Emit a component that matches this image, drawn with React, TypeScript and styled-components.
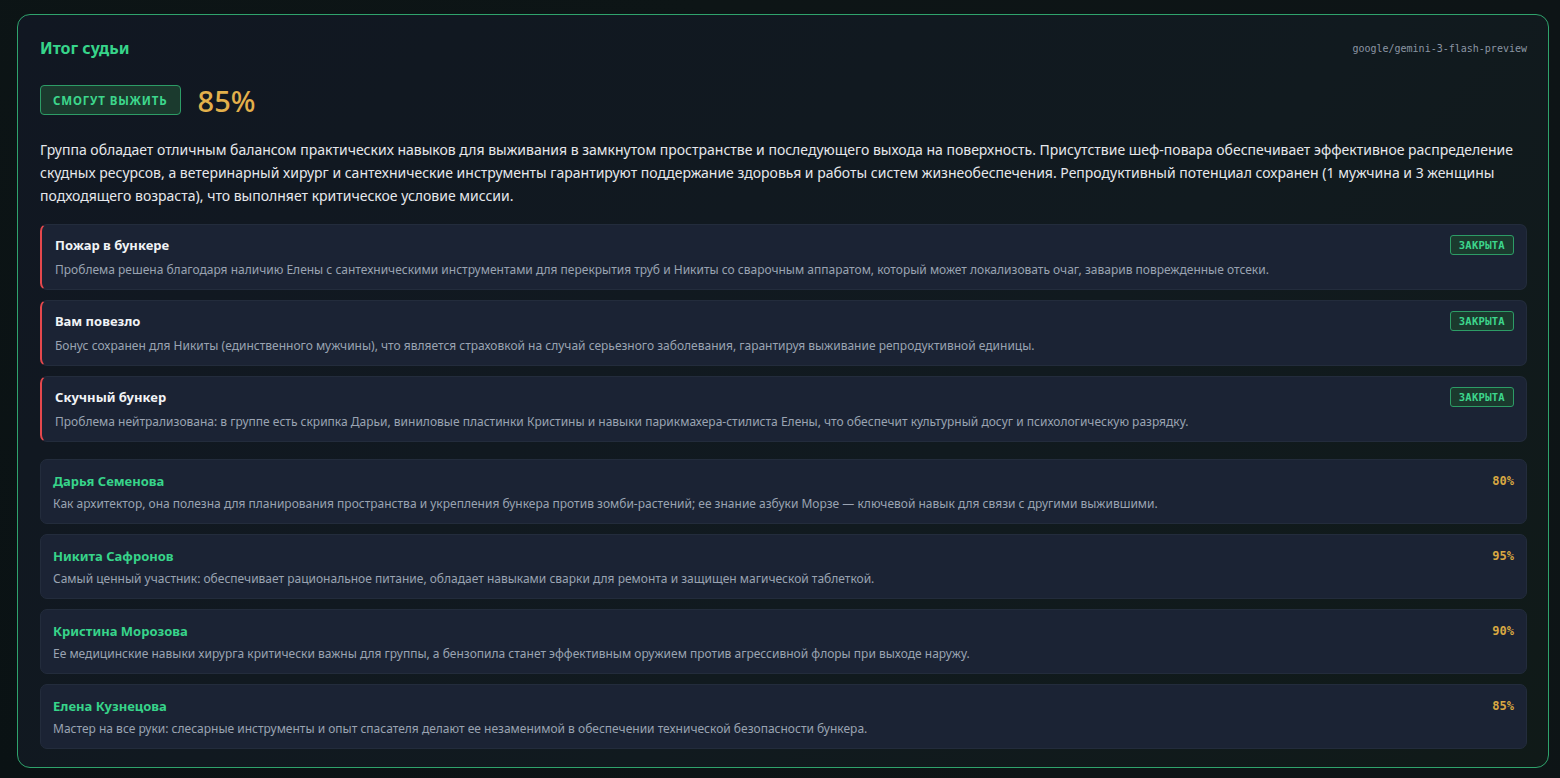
import React from "react";
import styled, { createGlobalStyle } from "styled-components";

const Global = createGlobalStyle`
  html, body { margin: 0; padding: 0; }
  body {
    background: #0c1314;
    font-family: "Noto Sans", "Open Sans", sans-serif;
    color: #e5e7eb;
  }
  * { box-sizing: border-box; }
`;

const Page = styled.div`
  min-height: 778px;
  padding: 14px 11px 11px 17px;
  background: radial-gradient(circle at 0% 100%, #0a1214 0%, #0d1516 60%, #0d1416 100%);
`;

const Card = styled.section`
  border: 1px solid #2fa36c;
  border-radius: 13px;
  padding: 21px 21px 18px 22px;
  background: linear-gradient(135deg, #111722 0%, #111a1f 60%, #101a18 100%);
  display: flex;
  flex-direction: column;
`;

const Header = styled.header`
  display: flex;
  justify-content: space-between;
  align-items: center;
  height: 24px;
`;

const Title = styled.h2`
  margin: 0;
  font-size: 16px;
  font-weight: 700;
  color: #37d48a;
`;

const Model = styled.span`
  font-family: "DejaVu Sans Mono", monospace;
  font-size: 10px;
  color: #8b95a3;
`;

const VerdictRow = styled.div`
  display: flex;
  align-items: center;
  gap: 17px;
  margin-top: 25px;
`;

const VerdictBadge = styled.span`
  display: inline-flex;
  align-items: center;
  justify-content: center;
  height: 30px;
  padding: 0 12px;
  border: 1px solid #2d9c66;
  border-radius: 4px;
  background: #1b3a2e;
  color: #3dd68c;
  font-size: 11.5px;
  font-weight: 700;
  letter-spacing: 0.85px;
  text-transform: uppercase;
`;

const Score = styled.span`
  font-size: 29px;
  font-weight: 500;
  color: #e3b04b;
  line-height: 1;
`;

const Summary = styled.p`
  margin: 23px 0 17px;
  font-size: 14px;
  line-height: 23px;
  color: #e6e8ec;
`;

const List = styled.div<{ $gap: number; $top?: number }>`
  display: flex;
  flex-direction: column;
  gap: ${(p) => p.$gap}px;
  margin-top: ${(p) => p.$top ?? 0}px;
`;

const Item = styled.div<{ $accent?: boolean }>`
  background: #1b2334;
  border: 1px solid #232c3c;
  border-left: ${(p) => (p.$accent ? "2px solid #e5484d" : "1px solid #232c3c")};
  border-radius: 7px;
  padding: ${(p) => (p.$accent ? "10px 12px 10px 13px" : "12px 12px 10px 12px")};
  display: flex;
  flex-direction: column;
  gap: ${(p) => (p.$accent ? 6 : 5)}px;
`;

const ItemHead = styled.div<{ $h: number }>`
  display: flex;
  justify-content: space-between;
  align-items: center;
  height: ${(p) => p.$h}px;
`;

const ItemTitle = styled.span<{ $green?: boolean }>`
  font-size: 13px;
  font-weight: 700;
  color: ${(p) => (p.$green ? "#37d48a" : "#f1f3f6")};
`;

const ItemText = styled.div`
  font-size: 12px;
  line-height: 18px;
  color: #9aa3b2;
`;

const Closed = styled.span`
  display: inline-flex;
  align-items: center;
  height: 20px;
  padding: 0 8px;
  border: 1px solid #2d9c66;
  border-radius: 3px;
  background: #1b3a2e;
  color: #3dd68c;
  font-family: "DejaVu Sans Mono", monospace;
  font-size: 10.5px;
  font-weight: 700;
  letter-spacing: 0.3px;
`;

const Percent = styled.span`
  font-family: "DejaVu Sans Mono", monospace;
  font-size: 12px;
  font-weight: 700;
  color: #d9a842;
`;

const issues = [
  {
    title: "Пожар в бункере",
    text: "Проблема решена благодаря наличию Елены с сантехническими инструментами для перекрытия труб и Никиты со сварочным аппаратом, который может локализовать очаг, заварив поврежденные отсеки.",
  },
  {
    title: "Вам повезло",
    text: "Бонус сохранен для Никиты (единственного мужчины), что является страховкой на случай серьезного заболевания, гарантируя выживание репродуктивной единицы.",
  },
  {
    title: "Скучный бункер",
    text: "Проблема нейтрализована: в группе есть скрипка Дарьи, виниловые пластинки Кристины и навыки парикмахера-стилиста Елены, что обеспечит культурный досуг и психологическую разрядку.",
  },
];

const players = [
  {
    name: "Дарья Семенова",
    pct: "80%",
    text: "Как архитектор, она полезна для планирования пространства и укрепления бункера против зомби-растений; ее знание азбуки Морзе — ключевой навык для связи с другими выжившими.",
  },
  {
    name: "Никита Сафронов",
    pct: "95%",
    text: "Самый ценный участник: обеспечивает рациональное питание, обладает навыками сварки для ремонта и защищен магической таблеткой.",
  },
  {
    name: "Кристина Морозова",
    pct: "90%",
    text: "Ее медицинские навыки хирурга критически важны для группы, а бензопила станет эффективным оружием против агрессивной флоры при выходе наружу.",
  },
  {
    name: "Елена Кузнецова",
    pct: "85%",
    text: "Мастер на все руки: слесарные инструменты и опыт спасателя делают ее незаменимой в обеспечении технической безопасности бункера.",
  },
];

export default function App() {
  return (
    <>
      <Global />
      <Page>
        <Card>
          <Header>
            <Title>Итог судьи</Title>
            <Model>google/gemini-3-flash-preview</Model>
          </Header>
          <VerdictRow>
            <VerdictBadge>Смогут выжить</VerdictBadge>
            <Score>85%</Score>
          </VerdictRow>
          <Summary>
            Группа обладает отличным балансом практических навыков для выживания в замкнутом пространстве и последующего выхода на поверхность. Присутствие шеф-повара обеспечивает эффективное распределение скудных ресурсов, а ветеринарный хирург и сантехнические инструменты гарантируют поддержание здоровья и работы систем жизнеобеспечения. Репродуктивный потенциал сохранен (1 мужчина и 3 женщины подходящего возраста), что выполняет критическое условие миссии.
          </Summary>
          <List $gap={10}>
            {issues.map((i) => (
              <Item $accent key={i.title}>
                <ItemHead $h={20}>
                  <ItemTitle>{i.title}</ItemTitle>
                  <Closed>ЗАКРЫТА</Closed>
                </ItemHead>
                <ItemText>{i.text}</ItemText>
              </Item>
            ))}
          </List>
          <List $gap={10} $top={17}>
            {players.map((p) => (
              <Item key={p.name}>
                <ItemHead $h={18}>
                  <ItemTitle $green>{p.name}</ItemTitle>
                  <Percent>{p.pct}</Percent>
                </ItemHead>
                <ItemText>{p.text}</ItemText>
              </Item>
            ))}
          </List>
        </Card>
      </Page>
    </>
  );
}
